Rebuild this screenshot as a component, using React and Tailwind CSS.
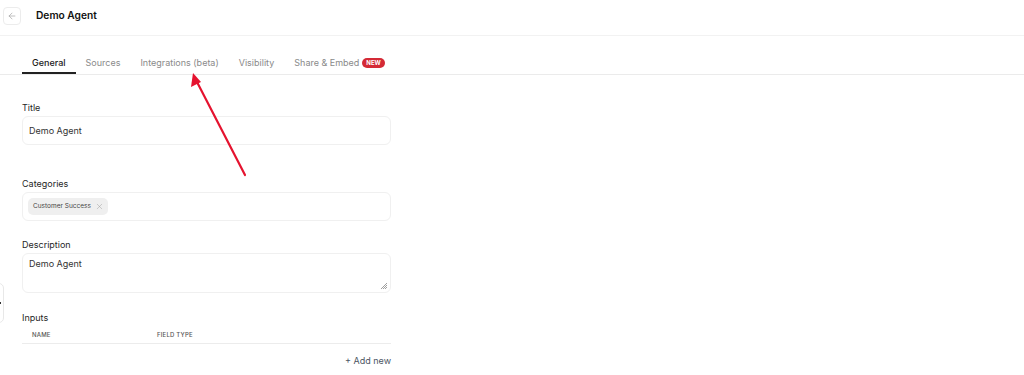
import { ArrowLeft, X } from "lucide-react";

const TABS = [
  { label: "General", active: true },
  { label: "Sources" },
  { label: "Integrations (beta)" },
  { label: "Visibility" },
  { label: "Share & Embed", badge: "NEW" },
];

function Field({ label, children, className = "" }) {
  return (
    <div className={className}>
      <p className="text-[9px] leading-[12px] text-[#1f1f1f] mb-[2px]">{label}</p>
      {children}
    </div>
  );
}

export default function App() {
  return (
    <div
      className="relative w-[1024px] h-[375px] overflow-hidden bg-white text-[#1f1f1f]"
      style={{ fontFamily: "Inter, 'Noto Sans', sans-serif" }}
    >
      {/* Header */}
      <div className="h-[36px] border-b border-[#f2f2f2] flex items-center pl-[3px] pb-[3px]">
        <button className="w-[18px] h-[18px] rounded-[4px] border border-[#ececec] flex items-center justify-center text-[#9a9a9a]">
          <ArrowLeft size={10} strokeWidth={1.5} />
        </button>
        <h1 className="ml-[15px] text-[10.2px] font-semibold text-[#111]">Demo Agent</h1>
      </div>

      {/* Tabs */}
      <div className="mt-[16px] border-b border-[#ebebeb] flex pl-[22px] h-[23px]">
        {TABS.map((tab) => (
          <div
            key={tab.label}
            className={`flex items-start pt-[5px] px-[10px] text-[9px] leading-[12px] ${
              tab.active ? "border-b-2 border-[#222] text-[#1a1a1a] font-medium" : "text-[#8a8a8a]"
            }`}
          >
            {tab.label}
            {tab.badge && (
              <span className="ml-[3px] mt-[1px] px-[4px] h-[10px] rounded-full bg-[#d42a36] text-white text-[6px] font-bold leading-[10px]">
                {tab.badge}
              </span>
            )}
          </div>
        ))}
      </div>

      {/* Form */}
      <div className="w-[369px] ml-[22px] mt-[27px]">
        <Field label="Title">
          <div className="h-[29px] rounded-[6px] border border-[#f0f0f0] flex items-center px-[6px] text-[9px] text-[#333]">
            Demo Agent
          </div>
        </Field>

        <Field label="Categories" className="mt-[33px]">
          <div className="h-[29px] rounded-[6px] border border-[#f0f0f0] flex items-center px-[5px]">
            <span className="h-[17px] rounded-[5px] bg-[#efefef] flex items-center gap-[4px] pl-[5px] pr-[4px] text-[6.5px] text-[#444]">
              Customer Success
              <X size={9} strokeWidth={1} className="text-[#888]" />
            </span>
          </div>
        </Field>

        <Field label="Description" className="mt-[18px]">
          <div className="relative h-[40px] rounded-[6px] border border-[#f0f0f0] px-[6px] pt-[3px] text-[9px] text-[#333]">
            Demo Agent
            <svg className="absolute right-[2px] bottom-[2px]" width="8" height="8" viewBox="0 0 8 8">
              <path d="M7 1L1 7M7 3L3 7M7 5L5 7" stroke="#888" strokeWidth="0.8" />
            </svg>
          </div>
        </Field>

        <div className="mt-[19px]">
          <p className="text-[9px] leading-[12px] text-[#1f1f1f]">Inputs</p>
          <div className="mt-[2px] h-[18px] border-b border-[#ececec] flex items-center text-[6px] font-medium uppercase text-[#555] tracking-[0.2px]">
            <span className="ml-[10px] w-[125px]">Name</span>
            <span>Field type</span>
          </div>
          <div className="mt-[11px] flex justify-end text-[9px] leading-[12px] text-[#4b5563]">+ Add new</div>
        </div>
      </div>

      {/* Collapsed side handle */}
      <div className="absolute left-[-12px] top-[283px] w-[16px] h-[40px] rounded-[5px] border border-[#e8e8e8] bg-white flex items-center justify-end pr-[2px]">
        <span className="w-[2px] h-[2px] bg-[#333]" />
      </div>

      {/* Annotation arrow */}
      <svg className="absolute left-0 top-0 pointer-events-none" width="1024" height="375">
        <line x1="245" y1="175" x2="197" y2="82" stroke="#e5132f" strokeWidth="2.2" strokeLinecap="round" />
        <polygon points="193,73 191,87 201,82" fill="#e5132f" />
      </svg>
    </div>
  );
}
